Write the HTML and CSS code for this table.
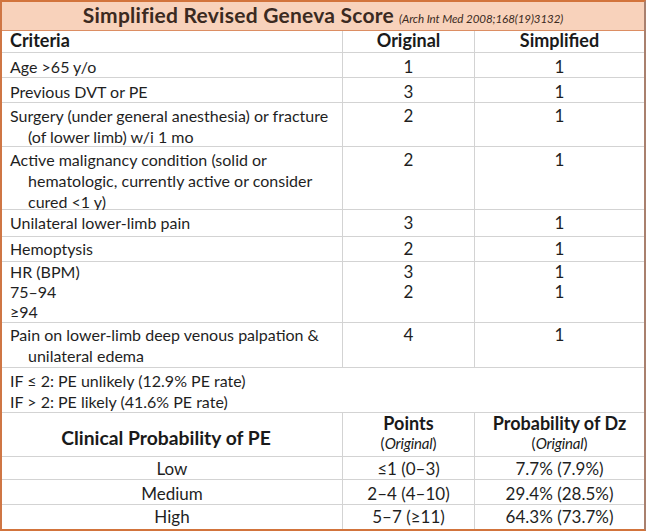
FILE: index.html
```html
<!DOCTYPE html>
<html>
<head>
<meta charset="utf-8">
<link rel="stylesheet" href="styles.css">
</head>
<body>
<div class="frame">
  <div class="title-bar">
    <span class="title">Simplified Revised Geneva Score</span>
    <span class="cite">(Arch Int Med 2008;168(19)3132)</span>
  </div>
  <div class="grid">
    <div class="row head">
      <div class="cell left">Criteria</div><div class="cell">Original</div><div class="cell">Simplified</div>
    </div>
    <div class="row p3">
      <div class="cell left">Age &gt;65 y/o</div><div class="cell num">1</div><div class="cell num">1</div>
    </div>
    <div class="row p3">
      <div class="cell left">Previous DVT or PE</div><div class="cell num">3</div><div class="cell num">1</div>
    </div>
    <div class="row p2">
      <div class="cell left hang">Surgery (under general anesthesia) or fracture<br>(of lower limb) w/i 1 mo</div><div class="cell num">2</div><div class="cell num">1</div>
    </div>
    <div class="row p2">
      <div class="cell left hang">Active malignancy condition (solid or<br>hematologic, currently active or consider<br>cured &lt;1 y)</div><div class="cell num">2</div><div class="cell num">1</div>
    </div>
    <div class="row p2">
      <div class="cell left">Unilateral lower-limb pain</div><div class="cell num">3</div><div class="cell num">1</div>
    </div>
    <div class="row p1">
      <div class="cell left">Hemoptysis</div><div class="cell num">2</div><div class="cell num">1</div>
    </div>
    <div class="row tight">
      <div class="cell left">HR (BPM)<br>75–94<br>≥94</div><div class="cell num">3<br>2</div><div class="cell num">1<br>1</div>
    </div>
    <div class="row p1">
      <div class="cell left hang">Pain on lower-limb deep venous palpation &amp;<br>unilateral edema</div><div class="cell num">4</div><div class="cell num">1</div>
    </div>
    <div class="row p2">
      <div class="cell left span">IF ≤ 2: PE unlikely (12.9% PE rate)<br>IF &gt; 2: PE likely (41.6% PE rate)</div>
    </div>
    <div class="row clin">
      <div class="cell clin-title">Clinical Probability of PE</div>
      <div class="cell"><div class="sub-head">Points</div><div class="sub-note">(<i>Original</i>)</div></div>
      <div class="cell"><div class="sub-head">Probability of Dz</div><div class="sub-note">(<i>Original</i>)</div></div>
    </div>
    <div class="row p1">
      <div class="cell num">Low</div><div class="cell num">≤1 (0–3)</div><div class="cell num">7.7% (7.9%)</div>
    </div>
    <div class="row p3">
      <div class="cell num">Medium</div><div class="cell num">2–4 (4–10)</div><div class="cell num">29.4% (28.5%)</div>
    </div>
    <div class="row p1">
      <div class="cell num">High</div><div class="cell num">5–7 (≥11)</div><div class="cell num">64.3% (73.7%)</div>
    </div>
  </div>
</div>
</body>
</html>
```
FILE: styles.css
```css
html, body {
  margin: 0;
  padding: 0;
  background: #ffffff;
}
.frame {
  width: 646px;
  height: 531px;
  box-sizing: border-box;
  overflow: hidden;
  border-top: 2px solid #d2743c;
  border-left: 2px solid #cf7644;
  border-bottom: 2px solid #d2743c;
  border-right: 2px solid #a9806e;
  background: #ffffff;
  font-family: Lato, "Open Sans", sans-serif;
  color: #1f1f1f;
  display: flex;
  flex-direction: column;
}
.title-bar {
  height: 29px;
  box-sizing: border-box;
  padding-top: 1px;
  background: #f8d2bb;
  border-bottom: 1px solid #dc8e63;
  display: flex;
  justify-content: center;
  align-items: baseline;
  gap: 5px;
  color: #3b2a21;
  white-space: nowrap;
}
.title {
  font-weight: 700;
  font-size: 21px;
  line-height: 24px;
  letter-spacing: 0.25px;
}
.cite {
  font-style: italic;
  font-size: 11.6px;
  line-height: 14px;
  letter-spacing: -0.1px;
}
.grid {
  display: grid;
  grid-template-columns: 340px 131px 169px;
  grid-template-rows: 21px 24px 24px 43px 62px 26px 24px 60px 44px 44px 43px 22px 24px 24px;
  gap: 1px;
  background: #d3d3d3;
  height: 498px;
}
.row {
  display: contents;
}
.cell {
  background: #ffffff;
  padding: 0 8px;
  line-height: 21px;
  font-size: 17px;
  text-align: center;
  white-space: nowrap;
}
.cell.left {
  text-align: left;
  font-size: 16px;
}
.hang {
  padding-left: 26px;
  text-indent: -18px;
}
.span {
  grid-column: 1 / -1;
}
.head .cell {
  font-weight: 700;
  font-size: 18px;
  line-height: 19px;
  color: #1a1a1a;
}
.p1 .cell { padding-top: 1px; }
.p2 .cell { padding-top: 2px; }
.p3 .cell { padding-top: 3px; }
.tight .cell { line-height: 20px; }
.clin .cell {
  color: #1a1a1a;
  padding-top: 0;
}
.clin .clin-title {
  font-weight: 700;
  font-size: 19.3px;
  line-height: 22px;
  padding-top: 14px;
  padding-right: 20px;
}
.sub-head {
  font-weight: 700;
  font-size: 18px;
  line-height: 20px;
}
.sub-note {
  margin-top: 1px;
  font-size: 15px;
  line-height: 18px;
}
.sub-note i {
  letter-spacing: -0.2px;
}
```
